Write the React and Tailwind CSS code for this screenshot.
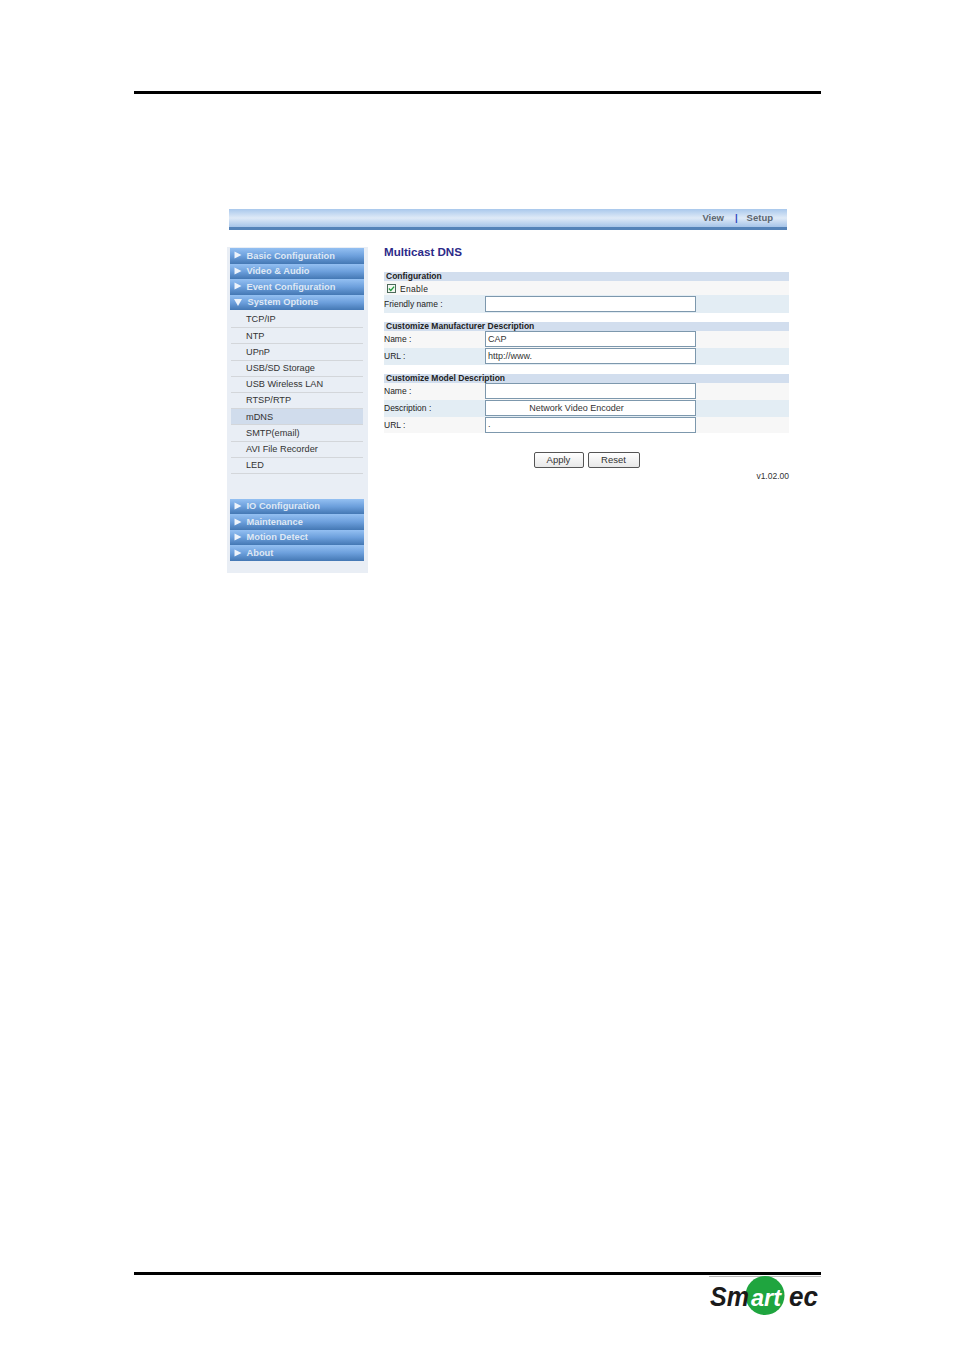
const topMenu = ["Basic Configuration", "Video & Audio", "Event Configuration"];
const subMenu = ["TCP/IP", "NTP", "UPnP", "USB/SD Storage", "USB Wireless LAN", "RTSP/RTP", "mDNS", "SMTP(email)", "AVI File Recorder", "LED"];
const bottomMenu = ["IO Configuration", "Maintenance", "Motion Detect", "About"];

function MenuHead({ label, open }) {
  return (
    <div className="h-[15.5px] flex items-center pl-[4px] bg-gradient-to-b from-[#94c0f2] via-[#6c9fdc] to-[#4478b4] text-[#dfe8f4] text-[9.3px] font-bold leading-none">
      <svg viewBox="0 0 8 8" className="w-[8px] h-[8px] shrink-0 mr-[4.5px] mb-[1px]">
        {open ? <path d="M0 1H8L4 8Z" fill="#eef4fb" /> : <path d="M0.5 0.5L7.5 4L0.5 7.5Z" fill="#eef4fb" />}
      </svg>
      <span className={open ? "ml-[1px] mt-[1px]" : "mt-[1px]"}>{label}</span>
    </div>
  );
}

function SectionHead({ children }) {
  return (
    <div className="h-[9px] bg-[#d2deee] pl-[2px] flex items-center text-[8.5px] font-bold text-[#222] leading-none whitespace-nowrap">
      {children}
    </div>
  );
}

function FieldRow({ label, value, tint, center, tall }) {
  return (
    <div className={`flex items-center text-[8.5px] text-[#222] ${tall ? "h-[18px]" : "h-[16.8px]"} ${tint ? "bg-[#e3edf4]" : "bg-[#f7f7f7]"}`}>
      <span className="w-[101px] shrink-0 leading-none">{label}</span>
      <div className={`w-[211px] h-[16px] bg-white border border-[#7d98ad] flex items-center text-[9px] text-[#333] leading-none ${center ? "justify-center pr-[28px]" : "pl-[2px]"}`}>
        {value}
      </div>
    </div>
  );
}

function Logo() {
  return (
    <svg viewBox="0 0 112 42" className="w-[112px] h-[42px]">
      <line x1="0" y1="0.5" x2="112" y2="0.5" stroke="#b8b8b8" strokeWidth="1" />
      <circle cx="56" cy="19.5" r="19.5" fill="#1fa53f" />
      <text x="1" y="30" fontFamily="Liberation Sans, sans-serif" fontWeight="700" fontStyle="italic" fontSize="28" textLength="39" lengthAdjust="spacingAndGlyphs" fill="#1a1a1a">Sm</text>
      <text x="42" y="30" fontFamily="Liberation Sans, sans-serif" fontWeight="700" fontStyle="italic" fontSize="24" textLength="30" lengthAdjust="spacingAndGlyphs" fill="#ffffff">art</text>
      <text x="80" y="30" fontFamily="Liberation Sans, sans-serif" fontWeight="700" fontStyle="italic" fontSize="28" textLength="29" lengthAdjust="spacingAndGlyphs" fill="#1a1a1a">ec</text>
    </svg>
  );
}

export default function App() {
  return (
    <div className="w-[954px] h-[1350px] bg-white flex flex-col font-['Liberation_Sans',Arial,sans-serif]">
      <div className="mt-[91px] ml-[134px] mr-[133px] h-[3px] bg-black" />

      <div className="mt-[115px] ml-[229px] w-[558px] h-[21px] flex items-center justify-end pr-[14px] pb-[1px] border-b-[3px] border-[#5583b8] bg-gradient-to-b from-[#a9c8ec] via-[#dfeaf7] to-[#a6c4e8] text-[9.5px] font-bold text-[#5c6670] leading-none">
        <span>View</span>
        <span className="ml-[11px] mr-[9px] text-[#2f45c0] font-bold">|</span>
        <span>Setup</span>
      </div>

      <div className="mt-[17px] ml-[227px] flex items-start">
        {/* Left menu */}
        <aside className="w-[141px] h-[326px] bg-[#e9eef5] px-[3px] pt-[1px]">
          <div className="w-[134px]">
            {topMenu.map((m) => (
              <MenuHead key={m} label={m} />
            ))}
            <MenuHead label="System Options" open />
            <div className="mt-[2px] mb-[25px]">
              {subMenu.map((s) => (
                <div
                  key={s}
                  className={`h-[16.2px] flex items-center pl-[15px] pt-[1px] mx-[1px] text-[9.2px] text-[#333] leading-none border-b border-[#d3d6da] ${s === "mDNS" ? "bg-[#d0dcec]" : ""}`}
                >
                  {s}
                </div>
              ))}
            </div>
            {bottomMenu.map((m) => (
              <MenuHead key={m} label={m} />
            ))}
          </div>
        </aside>

        {/* Form */}
        <main className="ml-[16px] w-[405px]">
          <h1 className="h-[25px] text-[11.6px] font-bold text-[#2c2a88] leading-[9px]">Multicast DNS</h1>

          <SectionHead>Configuration</SectionHead>
          <div className="h-[14px] bg-[#f7f7f7] flex items-center pl-[3px] pt-[1px] text-[8.5px] tracking-[0.3px] text-[#222] leading-none">
            <span className="w-[9px] h-[9px] border border-[#4c6a5a] bg-[#f4f8f2] flex items-center justify-center mr-[4px] mb-[1px]">
              <svg viewBox="0 0 8 8" className="w-[7px] h-[7px]">
                <path d="M1 4L3.2 6.2L7 1.8" fill="none" stroke="#1f9a3a" strokeWidth="1.5" />
              </svg>
            </span>
            <span className="mt-[2px]">Enable</span>
          </div>
          <FieldRow label="Friendly name :" value="" tint tall />

          <div className="mt-[9px]">
            <SectionHead>Customize Manufacturer Description</SectionHead>
          </div>
          <FieldRow label="Name :" value="CAP" />
          <FieldRow label="URL :" value="http://www." tint />

          <div className="mt-[9.4px]">
            <SectionHead>Customize Model Description</SectionHead>
          </div>
          <FieldRow label="Name :" value="" />
          <FieldRow label="Description :" value="Network Video Encoder" tint center />
          <FieldRow label="URL :" value="." />

          <div className="mt-[18.6px] flex justify-center gap-[4px]">
            <button className="w-[50px] h-[16px] rounded-[2px] border border-[#555] bg-gradient-to-b from-white to-[#e8e8e8] text-[9.5px] text-[#333] leading-none">Apply</button>
            <button className="w-[52px] h-[16px] rounded-[2px] border border-[#555] bg-gradient-to-b from-white to-[#e8e8e8] text-[9.5px] text-[#333] leading-none">Reset</button>
          </div>
          <div className="mt-[3px] text-right text-[8.5px] text-[#333] leading-[10px]">v1.02.00</div>
        </main>
      </div>

      <div className="mt-auto mb-[32px]">
        <div className="ml-[134px] mr-[133px] h-[3px] bg-black" />
        <div className="ml-[709px] mt-[1px]">
          <Logo />
        </div>
      </div>
    </div>
  );
}
